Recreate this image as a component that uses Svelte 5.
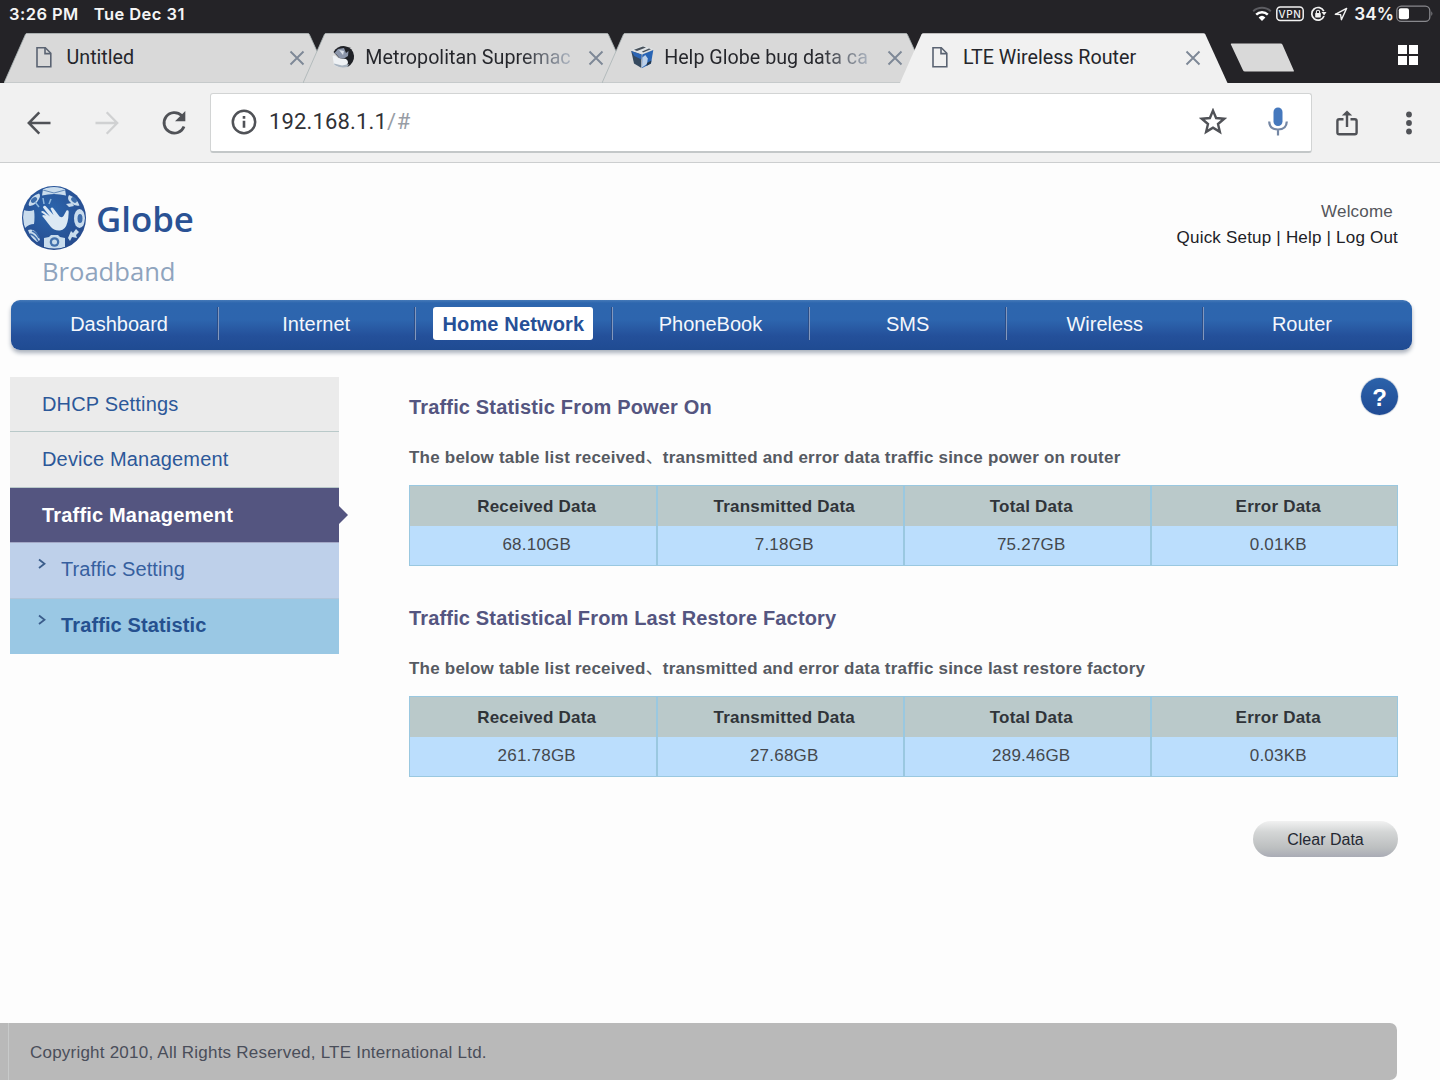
<script>
  const tabs = [
    { title: 'Untitled', icon: 'page' },
    { title: 'Metropolitan Supremac', icon: 'photo', fade: true },
    { title: 'Help Globe bug data ca', icon: 'cube', fade: true },
    { title: 'LTE Wireless Router', icon: 'page' }
  ];

  const menu = ['Dashboard', 'Internet', 'Home Network', 'PhoneBook', 'SMS', 'Wireless', 'Router'];

  const columns = ['Received Data', 'Transmitted Data', 'Total Data', 'Error Data'];

  const sections = [
    {
      title: 'Traffic Statistic From Power On',
      since: 'power on router',
      values: ['68.10GB', '7.18GB', '75.27GB', '0.01KB']
    },
    {
      title: 'Traffic Statistical From Last Restore Factory',
      since: 'last restore factory',
      values: ['261.78GB', '27.68GB', '289.46GB', '0.03KB']
    }
  ];

  let activeTab = 3;
  let activeMenu = 'Home Network';
</script>

<div class="screen">
  <div class="status">
    <span class="time">3:26 PM</span>
    <span class="date">Tue Dec 31</span>
    <div class="status-icons">
      <svg class="wifi" width="20" height="16" viewBox="0 0 20 16" fill="none">
        <path d="M1.2 5.2a13 13 0 0 1 17.6 0" stroke="#5c5c61" stroke-width="2" />
        <path d="M4.2 8.6a8.5 8.5 0 0 1 11.6 0" stroke="#fff" stroke-width="2.5" />
        <path d="M6.6 11.4a5 5 0 0 1 6.8 0L10 15z" fill="#fff" />
      </svg>
      <svg class="vpn" width="28" height="16" viewBox="0 0 28 16">
        <rect x=".8" y="1" width="26.4" height="13.6" rx="3.5" fill="none" stroke="#f2f2f2" stroke-width="1.5" />
        <text x="14" y="11.5" text-anchor="middle">VPN</text>
      </svg>
      <svg class="lock" width="17" height="16" viewBox="0 0 17 16" fill="none">
        <path d="M13.8 5.2A6.3 6.3 0 1 0 14 10" stroke="#f2f2f2" stroke-width="1.7" />
        <path d="M11.5 6h5l-2.4 3.6z" fill="#f2f2f2" />
        <rect x="5.2" y="7" width="5.6" height="4.4" rx=".6" fill="#f2f2f2" />
        <path d="M6.4 7V5.8a1.6 1.6 0 0 1 3.2 0V7" stroke="#f2f2f2" stroke-width="1.1" />
      </svg>
      <svg class="location" width="14" height="14" viewBox="0 0 14 14" fill="none">
        <path d="M1.3 7.3 12.6 1.4 7.4 12.7 6.6 7.6z" stroke="#f2f2f2" stroke-width="1.4" stroke-linejoin="round" />
      </svg>
      <span class="percent">34%</span>
      <svg class="battery" width="38" height="18" viewBox="0 0 38 18">
        <rect x=".8" y="1.2" width="33" height="15.2" rx="4.5" fill="none" stroke="#88888d" stroke-width="1.3" />
        <rect x="2.8" y="3.3" width="10.2" height="11" rx="2" fill="#fff" />
        <path d="M35.4 6.3q2 2.4 0 4.8z" fill="#88888d" />
      </svg>
    </div>
  </div>

  <div class="tab-bar">
    <div class="tabs">
      {#each tabs as tab, i}
        <div class="tab" class:active={i === activeTab}>
          <svg class="tab-shape" width="328" height="50" viewBox="0 0 328 50">
            <path d="M0 50 21.4 1.5Q22 .2 23.4 .2H303.400q1.400 0 2 1.300L327.500 50z" />
          </svg>
          <span class="favicon">
            {#if tab.icon === 'page'}
              <svg width="24" height="24" viewBox="0 0 24 24" fill="none" stroke="#5a6372" stroke-width="1.6">
                <path d="M5 2.800h8.300L18.800 8.300V21.700H5z" />
                <path d="M13 2.800V8.600h5.800" />
              </svg>
            {:else if tab.icon === 'photo'}
              <svg width="24" height="24" viewBox="0 0 24 24">
                <path d="M2.500 7Q7 .4 14 1.200q8 1.200 9 9.500.5 7-6.500 11.300z" fill="#1f2126" />
                <path d="M1.600 11Q3 9.500 7 13l8 1q4 3 0 7Q8 23.500 3 20z" fill="#eef1f4" />
                <path d="M3.500 8 7 4l6-1 2 5 2.500-2-.5 5-4 2.500-4.500-.5-3-3.500z" fill="#8c96aa" />
                <path d="m3 18.500 8 2 7-1.500-1.500 3q-8 1.500-13-2z" fill="#a9b4c0" />
                <path d="m8 5 4 5 1-4z" fill="#dbe1ea" />
              </svg>
            {:else}
              <svg width="24" height="24" viewBox="0 0 24 24">
                <path d="m.8 5 12-4.400L23.300 4l-11 5z" fill="#dfe3e6" />
                <path d="m4 4.700 9-3.200 3 1-9 3.400zM12 6.400l7-2.800 2 .6-8 3.400z" fill="#49525b" />
                <path d="m1.200 6 10.300 3.400-.4 13.400L4 18.500z" fill="#35495f" />
                <path d="m1.200 6 10.300 3.400-.2 5-7-3.400z" fill="#2c65b5" />
                <path d="M12.300 9.500 23.300 5 21 18.400l-9.300 4.800z" fill="#2864b4" />
                <path d="m12.300 12.500 3-2.500 2.500 3.500-.8 5.500-5 3.500z" fill="#bdd1ea" />
                <path d="m17 18 4.400-2.500-.5 3-4.500 2.400z" fill="#25384d" />
              </svg>
            {/if}
          </span>
          <span class="tab-title" class:fade={tab.fade}>{tab.title}</span>
          <svg class="close" width="16" height="16" viewBox="0 0 16 16">
            <path d="m1.500 1.500 13 13m0-13-13 13" stroke="#7e8897" stroke-width="1.9" />
          </svg>
        </div>
      {/each}
    </div>
    <svg class="new-tab" width="66" height="30" viewBox="0 0 66 30">
      <path d="M1.500.5h49q1.500 0 2 1.300l11.300 25.700q.5 1-.8 1H15q-1.500 0-2-1.300L.9 1.500Q.5.500 1.500.500z" fill="#d9d9d9" />
    </svg>
    <svg class="switcher" width="20" height="20" viewBox="0 0 20 20" fill="#fff">
      <path d="M0 0h9v9H0zM11 0h9v9h-9zM0 11h9v9H0zM11 11h9v9h-9z" />
    </svg>
  </div>

  <div class="toolbar">
    <svg class="back" width="24" height="24" viewBox="0 0 24 24" fill="none" stroke="#505257" stroke-width="2.500">
      <path d="M23.500 12H2M12.300 1.300 1.800 12l10.500 10.700" />
    </svg>
    <svg class="forward" width="24" height="24" viewBox="0 0 24 24" fill="none" stroke="#d0d1d2" stroke-width="2.300">
      <path d="M.5 12H22M11.700 1.300 22.200 12 11.700 22.700" />
    </svg>
    <svg class="reload" width="26" height="26" viewBox="0 0 26 26" fill="none">
      <path d="M20.700 5.600A10.300 10.300 0 1 0 23 16.500" stroke="#505257" stroke-width="2.800" />
      <path d="M24.300 1v10.300H14z" fill="#505257" />
    </svg>
    <div class="address">
      <svg width="26" height="26" viewBox="0 0 26 26" fill="none" stroke="#505257">
        <circle cx="13" cy="13" r="11.200" stroke-width="2.500" />
        <path d="M13 11.800v7M13 7v2.700" stroke-width="2.600" />
      </svg>
      <span class="url">192.168.1.1<i>/#</i></span>
      <svg class="star" width="28" height="27" viewBox="0 0 28 27">
        <path d="m14 2.600 3.100 7.400 8.100.7-6.200 5.300 1.900 7.900L14 19.700l-6.900 4.200L9 16l-6.200-5.300 8.100-.7z" fill="none" stroke="#505257" stroke-width="2.400" />
      </svg>
      <svg class="mic" width="20" height="29" viewBox="0 0 20 29">
        <rect x="5.500" y=".5" width="9" height="18.500" rx="4.500" fill="#4578bd" />
        <path d="M1.200 14.500q.3 8 8.800 8t8.800-8M10 22.500V28.500" fill="none" stroke="#7587a4" stroke-width="2.200" />
      </svg>
    </div>
    <svg class="share" width="22" height="26" viewBox="0 0 22 26" fill="none" stroke="#505257" stroke-width="2.400">
      <path d="M7.500 9.200H3.200q-1.800 0-1.800 1.800v11.500q0 1.800 1.800 1.800h15.600q1.800 0 1.800-1.800V11q0-1.800-1.800-1.800h-4.300M11 17V3.500" />
      <path d="M5.800 5.600 11 .4l5.200 5.200z" fill="#505257" stroke="none" />
    </svg>
    <svg class="more" width="8" height="24" viewBox="0 0 8 24" fill="#505257">
      <circle cx="4" cy="3.500" r="2.900" />
      <circle cx="4" cy="12" r="2.900" />
      <circle cx="4" cy="20.500" r="2.900" />
    </svg>
  </div>

  <div class="page">
    <header>
      <div class="brand">
        <div class="brand-row">
          <svg width="66" height="66" viewBox="0 0 66 66">
            <defs>
              <radialGradient id="ball" cx=".45" cy=".4" r=".65">
                <stop offset="0" stop-color="#2b66ae" />
                <stop offset="1" stop-color="#274a8c" />
              </radialGradient>
              <clipPath id="ball-clip"><circle cx="33" cy="33" r="31" /></clipPath>
            </defs>
            <circle cx="33" cy="33" r="32" fill="url(#ball)" />
            <g clip-path="url(#ball-clip)" fill="#c9dced">
              <path d="M22 4q11-4.500 22 0l1 6.500q-12-3-24 0z" />
              <path d="m22 5 11 3 11-3" fill="none" stroke="#6288b8" />
              <path d="M8 18q2-7 10-9.500 2 2 0 5.500-3 6-9 7-2-.5-1-3z" />
              <ellipse cx="13" cy="15" rx="3.500" ry="2.200" transform="rotate(-40 13 15)" fill="#3d6dab" />
              <path d="M48 10q8 3 10.500 10.500-5 1-9-3-4-3.500-1.500-7.500z" />
              <ellipse cx="53" cy="15" rx="3.300" ry="2.200" transform="rotate(45 53 15)" fill="#3d6dab" />
              <path d="m45 19 6-1 2 3-5 1z" />
              <path d="M2.500 25q6 2 10.500 0 1 7 0 14-5 0-9 4-3-8-1.500-18z" />
              <ellipse cx="58.500" cy="33.500" rx="5.500" ry="9.500" />
              <ellipse cx="59" cy="33.500" rx="2.500" ry="4.500" fill="#3e6cab" />
              <path d="M7 45q8-3 12 10l-3 2Q9 52 7 45z" />
              <path d="M9 49q5 1 8 7M11 46q5 2 7 7" fill="none" stroke="#3e6cab" stroke-width="1.600" />
              <path d="m23 53 5-1 2-2h7l2 2 5 1v9q-10 3-21 0z" />
              <circle cx="33.500" cy="57" r="4.800" fill="#4572ad" />
              <circle cx="33.500" cy="57" r="2.500" fill="#c9dced" />
              <path d="m47 53 3-7 2 2 3-4 3 3-3 3 1 3-5-1-2 4z" />
            </g>
            <path d="M20 27q1.200-1.800 3-.5l6 5-7-9q.3-2.500 2.500-1.500l8 9-3-6.500q1.500-2 3 0l6 8q3 1.500 4-.5l3-5.500q2.300-1.200 2.200 1.500-.2 6-1.200 10-2 8-7.500 8.500-6 .5-9.500-4l-7-9q-2-1.500-.500-2.500l3 .5z" fill="#dce9f4" />
            <path d="m18 22-4-5m9 2-1-6m6 6 2-5" stroke="#8eb8de" stroke-width="1.500" />
          </svg>
          <span class="brand-name">Globe</span>
        </div>
        <span class="brand-sub">Broadband</span>
      </div>
      <div class="account">
        <span class="welcome">Welcome</span>
        <span class="links">Quick Setup | Help | Log Out</span>
      </div>
    </header>

    <nav>
      {#each menu as item}
        <div class="nav-item" class:selected={item === activeMenu}><span>{item}</span></div>
      {/each}
    </nav>

    <div class="content">
      <aside>
        <div class="side-item">DHCP Settings</div>
        <div class="side-item">Device Management</div>
        <div class="side-item current">Traffic Management</div>
        <div class="side-item sub">
          <svg width="8" height="12" viewBox="0 0 8 12"><path d="m1 1.500 5.500 4.300L1 10" /></svg>
          <span>Traffic Setting</span>
        </div>
        <div class="side-item sub chosen">
          <svg width="8" height="12" viewBox="0 0 8 12"><path d="m1 1.500 5.500 4.300L1 10" /></svg>
          <span>Traffic Statistic</span>
        </div>
      </aside>

      <main>
        <div class="help">?</div>
        {#each sections as section}
          <section>
            <h2>{section.title}</h2>
            <p>The below table list received<span class="comma">、</span>transmitted and error data traffic since {section.since}</p>
            <div class="table">
              {#each columns as column}
                <div class="cell head">{column}</div>
              {/each}
              {#each section.values as value}
                <div class="cell">{value}</div>
              {/each}
            </div>
          </section>
        {/each}
        <button>Clear Data</button>
      </main>
    </div>

    <footer>Copyright 2010, All Rights Reserved, LTE International Ltd.</footer>
  </div>
</div>

<style>
  :global(body) {
    background: #fdfdfd;
  }
  .screen {
    display: flex;
    flex-direction: column;
    width: 1440px;
    height: 1080px;
    overflow: hidden;
    background: #fdfdfd;
    font-family: "Liberation Sans", Arial, "Noto Sans CJK SC", sans-serif;
    white-space: nowrap;
  }
  svg {
    display: block;
    flex: none;
  }

  /* status bar */
  .status {
    display: flex;
    align-items: center;
    height: 33px;
    padding: 0 8px 5px 9px;
    box-sizing: border-box;
    background: #242327;
    color: #f5f5f5;
    font: 600 16.5px Inter, sans-serif;
    letter-spacing: 0.45px;
  }
  .date {
    margin-left: 15px;
  }
  .status-icons {
    display: flex;
    align-items: center;
    margin-left: auto;
  }
  .wifi {
    margin-right: -1px;
  }
  .vpn {
    margin-left: 5px;
  }
  .vpn text {
    font: 500 10px Inter, sans-serif;
    letter-spacing: 0.6px;
    fill: #f2f2f2;
  }
  .lock {
    margin-left: 6px;
  }
  .location {
    margin-left: 7px;
  }
  .percent {
    margin-left: 6px;
    font-size: 17.2px;
    line-height: 20px;
    padding-bottom: 1px;
    letter-spacing: 0;
  }
  .battery {
    margin-left: 2px;
    margin-right: -2px;
  }

  /* tabs */
  .tab-bar {
    display: flex;
    height: 50px;
    padding-left: 4px;
    background: #242327;
  }
  .tabs {
    display: flex;
  }
  .tab {
    position: relative;
    display: flex;
    align-items: center;
    width: 327px;
    height: 50px;
    margin-right: -28.2px;
    box-sizing: border-box;
    padding: 0 26px 2px 28px;
  }
  .tab-shape {
    position: absolute;
    left: 0;
    top: 0;
    fill: #d9d9d9;
    stroke: #aab4b5;
    stroke-width: 0.8;
  }
  .active .tab-shape {
    fill: #f1f1f1;
    stroke: none;
  }
  .favicon,
  .tab-title,
  .close {
    position: relative;
  }
  .tab-title {
    flex: 1;
    margin-left: 10.500px;
    color: #25262b;
    font: 19.700px Roboto, sans-serif;
  }
  .tab-title.fade {
    color: transparent;
    background: linear-gradient(90deg, #25262b 155px, #a5adb9 202px);
    background-clip: text;
    -webkit-background-clip: text;
  }
  .close {
    margin-top: 1px;
  }
  .new-tab {
    margin: 10px 0 0 31px;
  }
  .switcher {
    margin: 12px 22px 0 auto;
  }

  /* toolbar */
  .toolbar {
    display: flex;
    align-items: center;
    height: 80px;
    box-sizing: border-box;
    padding: 0 27px;
    background: #f1f1f1;
    border-bottom: 1.500px solid #cccecf;
  }
  .forward {
    margin-left: 44px;
  }
  .reload {
    margin-left: 42px;
  }
  .address {
    display: flex;
    align-items: center;
    width: 1102px;
    height: 60px;
    margin-left: 23px;
    padding: 0 23px 1px 20px;
    box-sizing: border-box;
    background: #fff;
    border: 1px solid #d2d4d4;
    border-bottom: 2px solid #c3c7c8;
    border-radius: 3px;
  }
  .url {
    margin-left: 12px;
    color: #303136;
    font: 22px Roboto, sans-serif;
    letter-spacing: 0.150px;
  }
  .url i {
    color: #989da5;
    font-style: normal;
    letter-spacing: 0.6px;
  }
  .star {
    margin-left: auto;
  }
  .mic {
    margin-left: 41px;
  }
  .share {
    margin-left: 24px;
  }
  .more {
    margin-left: 47px;
  }

  /* router page */
  .page {
    display: flex;
    flex: 1;
    flex-direction: column;
  }
  header {
    display: flex;
    justify-content: space-between;
    height: 137px;
    box-sizing: border-box;
    padding: 22px 42px 0 21px;
  }
  .brand-row {
    display: flex;
    align-items: center;
  }
  .brand-name {
    margin-left: 9px;
    color: #2a5294;
    font: 600 34.800px "Open Sans", sans-serif;
    line-height: 68px;
    height: 66px;
  }
  .brand-sub {
    display: block;
    margin-left: 21px;
    margin-top: 3px;
    color: #8fa4be;
    font: 25.600px "Open Sans", sans-serif;
    line-height: 36px;
  }
  .account {
    display: flex;
    flex-direction: column;
    align-items: flex-end;
    padding-top: 14px;
    font-size: 17px;
    line-height: 26px;
    letter-spacing: 0.200px;
  }
  .welcome {
    margin-right: 5px;
    color: #54565b;
  }
  .links {
    color: #202126;
  }
  nav {
    display: flex;
    width: 1401px;
    height: 50px;
    margin-left: 11px;
    padding: 0 11.5px 0 9.500px;
    box-sizing: border-box;
    background: linear-gradient(#467ab8 0, #2d66ae 3px, #2d65ae 20px, #24509a 36px, #1f4b92 100%);
    border-radius: 9px;
    box-shadow: 0 3px 4px #a9b0bb;
  }
  .nav-item {
    position: relative;
    display: flex;
    flex: 1;
    align-items: center;
    justify-content: center;
    padding-bottom: 2px;
    color: #f4f7fc;
    font-size: 20px;
  }
  .nav-item + .nav-item::before {
    content: "";
    position: absolute;
    left: -1px;
    top: 7px;
    width: 1px;
    height: 33px;
    background: #8297bd;
    border-left: 1px solid #2a4d87;
  }
  .selected span {
    padding: 1px 9px 0;
    background: #fff;
    border-radius: 3px;
    color: #265097;
    font-weight: bold;
    line-height: 32px;
    letter-spacing: 0.150px;
  }
  .nav-item.selected {
    padding-bottom: 3px;
  }
  .content {
    display: flex;
    padding: 27px 42px 0 10px;
  }
  aside {
    width: 329px;
    flex: none;
  }
  .side-item {
    position: relative;
    height: 55.400px;
    box-sizing: border-box;
    padding-left: 32px;
    background: #ebebeb;
    border-bottom: 1px solid #b9c9c9;
    color: #2c5899;
    font-size: 20px;
    line-height: 54px;
    letter-spacing: 0.180px;
  }
  .side-item.current {
    background: #545580;
    color: #fff;
    font-weight: bold;
    border-color: #a3a8c6;
  }
  .current::after {
    content: "";
    position: absolute;
    left: 100%;
    top: 18px;
    border: 9px solid transparent;
    border-left-color: #545580;
    border-right: 0;
  }
  .side-item.sub {
    display: flex;
    padding-left: 28px;
    background: #bed0ea;
    border-color: #b1c5da;
    color: #365f9f;
    line-height: 53px;
    letter-spacing: 0.120px;
  }
  .sub svg {
    margin: 15px 15px 0 0;
    fill: none;
    stroke: #3b5d8b;
    stroke-width: 1.800;
  }
  .side-item.chosen {
    background: #9ac8e4;
    border-color: #9ac8e4;
    color: #25508f;
    font-weight: bold;
  }
  main {
    position: relative;
    flex: 1;
    margin-left: 70px;
  }
  .help {
    position: absolute;
    right: 0;
    top: 1px;
    width: 37px;
    height: 37px;
    background: linear-gradient(#2b62aa, #204b94);
    border-radius: 50%;
    box-shadow: 0 0 1px 0.5px #b3bccb;
    color: #fff;
    font-size: 24px;
    font-weight: bold;
    line-height: 39px;
    text-align: center;
  }
  section {
    height: 211px;
    box-sizing: border-box;
    padding-top: 15px;
  }
  h2 {
    margin: 0;
    color: #545580;
    font-size: 20px;
    line-height: 30px;
    letter-spacing: 0.160px;
  }
  p {
    height: 30px;
    margin: 21px 0 0;
    color: #565a62;
    font-size: 17px;
    font-weight: bold;
    line-height: 30px;
    letter-spacing: 0.210px;
  }
  .comma {
    font-weight: normal;
  }
  .table {
    display: grid;
    grid-template-columns: 248px 247px 247px 1fr;
    grid-template-rows: 40px 39px;
    margin-top: 12px;
    border: 1px solid #9ac8e0;
    background: #bbdefd;
  }
  .cell {
    padding-left: 7.5px;
    color: #44484d;
    font-size: 17px;
    line-height: 37px;
    letter-spacing: 0.220px;
    text-align: center;
  }
  .cell.head {
    background: #bac9ca;
    color: #303439;
    font-weight: bold;
    line-height: 41px;
    height: 40px;
  }
  .cell:not(:nth-child(4n)) {
    border-right: 2px solid #9ac8e0;
  }
  button {
    display: block;
    width: 145px;
    height: 36px;
    margin: 22px 0 0 auto;
    padding: 2px 0 0;
    border: 0;
    border-radius: 18px;
    background: linear-gradient(#f1f1f1, #d4d6d6 30%, #bcbfc0 75%, #a9abb5);
    color: #242832;
    font: 16px "Liberation Sans", Arial, sans-serif;
  }
  footer {
    width: 1397px;
    height: 57px;
    margin-top: auto;
    padding-left: 30px;
    box-sizing: border-box;
    background: linear-gradient(90deg, #b9b9b9 8px, #c8caca 8px, #c8caca 9px, #b9b9b9 9px);
    border-radius: 0 7px 7px 0;
    color: #4a4e5a;
    font-size: 17px;
    line-height: 59px;
    letter-spacing: 0.220px;
  }
</style>
